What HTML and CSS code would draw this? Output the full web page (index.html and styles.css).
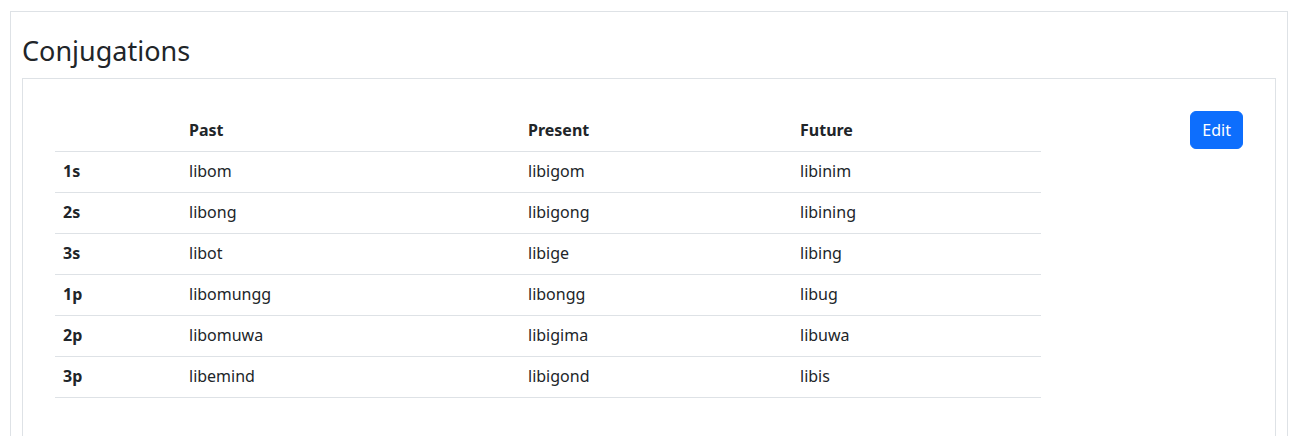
FILE: index.html
```html
<!DOCTYPE html>
<html lang="en">
<head>
<meta charset="utf-8">
<title>Conjugations</title>
<link rel="stylesheet" href="styles.css">
</head>
<body>
<div class="outer-card">
  <h3 class="title">Conjugations</h3>
  <div class="inner-card">
    <div class="content-row">
      <table class="conj-table">
        <thead>
          <tr><th class="c1"></th><th class="c2">Past</th><th class="c3">Present</th><th class="c4">Future</th></tr>
        </thead>
        <tbody>
          <tr><th>1s</th><td>libom</td><td>libigom</td><td>libinim</td></tr>
          <tr><th>2s</th><td>libong</td><td>libigong</td><td>libining</td></tr>
          <tr><th>3s</th><td>libot</td><td>libige</td><td>libing</td></tr>
          <tr><th>1p</th><td>libomungg</td><td>libongg</td><td>libug</td></tr>
          <tr><th>2p</th><td>libomuwa</td><td>libigima</td><td>libuwa</td></tr>
          <tr><th>3p</th><td>libemind</td><td>libigond</td><td>libis</td></tr>
        </tbody>
      </table>
      <div class="actions">
        <button class="btn-edit" type="button">Edit</button>
      </div>
    </div>
  </div>
</div>
</body>
</html>
```

FILE: styles.css
```css
* { box-sizing: border-box; }

html, body {
  background: #ffffff;
}

body {
  margin: 0;
  padding: 11px 8px 0 10px;
  font-family: "Noto Sans", "Open Sans", sans-serif;
  font-size: 16px;
  line-height: 1.5;
  color: #212529;
}

.outer-card {
  border: 1px solid #dee2e6;
  padding: 22px 11px 12px 11px;
  min-height: 430px;
}

.title {
  margin: 0 0 10px 0;
  font-size: 27px;
  font-weight: 400;
  line-height: 1.25;
  color: #212529;
}

.inner-card {
  border: 1px solid #dee2e6;
  padding: 32px 32px 32px 32px;
  min-height: 360px;
}

.content-row {
  display: flex;
  align-items: flex-start;
  justify-content: space-between;
}

.conj-table {
  width: 986px;
  border-collapse: collapse;
}

.conj-table th,
.conj-table td {
  padding: 7px 8px 9px 8px;
  text-align: left;
  border-bottom: 1px solid #dee2e6;
  vertical-align: top;
  height: 41px;
}

.conj-table th { font-weight: 700; }
.conj-table td { font-weight: 400; }

.c1 { width: 126px; }
.c2 { width: 339px; }
.c3 { width: 272px; }
.c4 { width: 249px; }

.btn-edit {
  display: inline-block;
  font-family: inherit;
  font-size: 16px;
  line-height: 24px;
  padding: 6px 11px;
  color: #ffffff;
  background: #0d6efd;
  border: 1px solid #0d6efd;
  border-radius: 6px;
  cursor: pointer;
}
```
